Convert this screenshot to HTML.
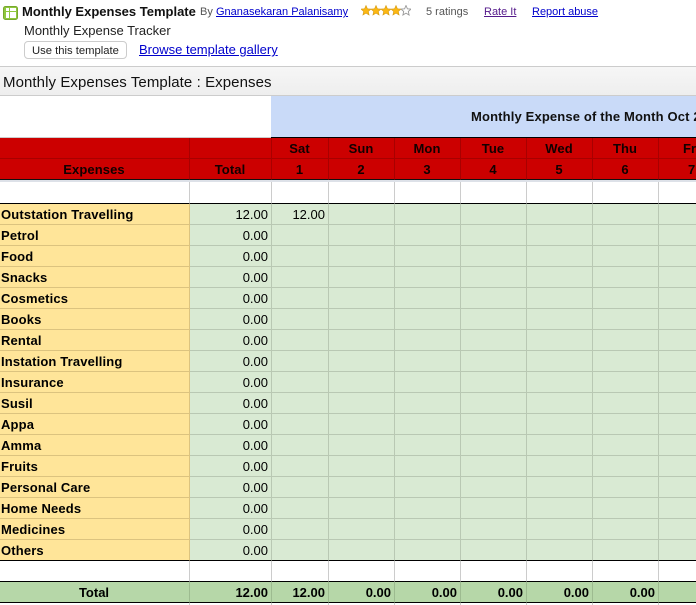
<!DOCTYPE html>
<html><head><meta charset="utf-8">
<style>
html,body{margin:0;padding:0;background:#fff;width:696px;height:605px;overflow:hidden;font-family:"Liberation Sans",Arial,sans-serif;color:#000}
.a{position:absolute;white-space:nowrap}
a{color:#00c;text-decoration:underline}
#wrap{position:absolute;left:0;top:96px;width:696px;height:509px;overflow:hidden}
table{border-collapse:separate;border-spacing:0;table-layout:fixed;width:696px;font-size:13px;line-height:16px}
td{box-sizing:border-box;padding:2px 3px 0 2px;border-right:1px solid #ccc;border-bottom:1px solid #ccc;height:21px;overflow:hidden;white-space:nowrap;background:#fff}
td:last-child{border-right:0}
tr.r td{background:#c00;border-right-color:#a80000;border-bottom-color:#a80000;font-weight:bold;text-align:center;letter-spacing:.1px;color:#100}
tr.r td:last-child{text-align:left;padding:2px 0 0 24px}
tr.r2 td:last-child{padding-left:29px}
tr.r2 td{border-bottom:1px solid #111}
tr.g td{background:#d9ead3;border-right-color:#b9c8b3;border-bottom-color:#b9c8b3;text-align:right}
tr.g td:first-child{background:#ffe599;border-right-color:#dcc37f;border-bottom-color:#dcc37f;text-align:left;font-weight:bold;padding-left:1px;letter-spacing:.15px}
tr.b td{border-bottom-color:#000}
tr.t td{background:#b6d7a8;border-right-color:#9dbb90;border-bottom-color:#000;font-weight:bold;text-align:right}
tr.t td:first-child{text-align:center}
tr.s td{height:24px}
</style></head><body>
<svg class="a" style="left:3px;top:6px" width="15" height="14" viewBox="0 0 15 14"><rect x="0.5" y="0.5" width="14" height="13" rx="2" fill="#8fc83d" stroke="#78a82e"/><rect x="3" y="2" width="10" height="10" fill="#fff"/><rect x="3" y="5" width="10" height="1" fill="#8fc83d"/><rect x="6" y="2" width="1" height="10" fill="#8fc83d"/></svg>
<div class="a" style="left:22px;top:4px;font-size:13px;line-height:16px;font-weight:bold;color:#111">Monthly Expenses Template</div>
<div class="a" style="left:200px;top:5px;font-size:11px;line-height:15px;color:#555">By</div>
<a class="a" style="left:216px;top:5px;font-size:11px;line-height:15px" href="#">Gnanasekaran Palanisamy</a>
<svg class="a" style="left:361px;top:5px" width="50" height="11" viewBox="0 0 50 11">
<g fill="#fcb813" stroke="#d69a10" stroke-width="0.6">
<polygon points="5,.5 6.4,3.8 10,4.1 7.3,6.4 8.1,10 5,8.1 1.9,10 2.7,6.4 0,4.1 3.6,3.8"/>
<polygon transform="translate(10 0)" points="5,.5 6.4,3.8 10,4.1 7.3,6.4 8.1,10 5,8.1 1.9,10 2.7,6.4 0,4.1 3.6,3.8"/>
<polygon transform="translate(20 0)" points="5,.5 6.4,3.8 10,4.1 7.3,6.4 8.1,10 5,8.1 1.9,10 2.7,6.4 0,4.1 3.6,3.8"/>
<polygon transform="translate(30 0)" points="5,.5 6.4,3.8 10,4.1 7.3,6.4 8.1,10 5,8.1 1.9,10 2.7,6.4 0,4.1 3.6,3.8"/>
</g>
<polygon transform="translate(40 0)" fill="#fff" stroke="#999" stroke-width="0.9" points="5,.5 6.4,3.8 10,4.1 7.3,6.4 8.1,10 5,8.1 1.9,10 2.7,6.4 0,4.1 3.6,3.8"/>
</svg>
<div class="a" style="left:426px;top:5px;font-size:11px;line-height:15px;color:#555">5 ratings</div>
<a class="a" style="left:484px;top:5px;font-size:11px;line-height:15px;color:#551a8b" href="#">Rate It</a>
<a class="a" style="left:532px;top:5px;font-size:11px;line-height:15px" href="#">Report abuse</a>
<div class="a" style="left:24px;top:23px;font-size:13px;line-height:16px;color:#222">Monthly Expense Tracker</div>
<div class="a" style="left:24px;top:41px;width:103px;height:18px;box-sizing:border-box;border:1px solid #ccc;border-radius:4px;background:#fff;font-size:11.25px;line-height:18px;text-align:center;color:#222">Use this template</div>
<a class="a" style="left:139px;top:42px;font-size:13px;line-height:16px" href="#">Browse template gallery</a>
<div class="a" style="left:0;top:66px;width:696px;height:30px;box-sizing:border-box;border-top:1px solid #ccc;border-bottom:1px solid #ccc;background:linear-gradient(#f6f6f6,#eee)"></div>
<div class="a" style="left:3px;top:74px;font-size:15px;line-height:18px;letter-spacing:.08px;color:#111">Monthly Expenses Template : Expenses</div>
<div id="wrap">
<table>
<colgroup><col style="width:190px"><col style="width:82px"><col style="width:57px"><col style="width:66px"><col style="width:66px"><col style="width:66px"><col style="width:66px"><col style="width:66px"><col style="width:37px"></colgroup>
<tr><td colspan="2" style="height:42px;border:0;border-bottom:1px solid #ccc"></td><td colspan="7" style="height:42px;background:#c9daf8;border:0;border-bottom:1px solid #000"></td></tr>
<tr class="r"><td></td><td></td><td>Sat</td><td>Sun</td><td>Mon</td><td>Tue</td><td>Wed</td><td>Thu</td><td>Fri</td></tr>
<tr class="r r2"><td>Expenses</td><td>Total</td><td>1</td><td>2</td><td>3</td><td>4</td><td>5</td><td>6</td><td>7</td></tr>
<tr class="b s"><td></td><td></td><td></td><td></td><td></td><td></td><td></td><td></td><td></td></tr>
<tr class="g"><td>Outstation Travelling</td><td>12.00</td><td>12.00</td><td></td><td></td><td></td><td></td><td></td><td></td></tr>
<tr class="g"><td>Petrol</td><td>0.00</td><td></td><td></td><td></td><td></td><td></td><td></td><td></td></tr>
<tr class="g"><td>Food</td><td>0.00</td><td></td><td></td><td></td><td></td><td></td><td></td><td></td></tr>
<tr class="g"><td>Snacks</td><td>0.00</td><td></td><td></td><td></td><td></td><td></td><td></td><td></td></tr>
<tr class="g"><td>Cosmetics</td><td>0.00</td><td></td><td></td><td></td><td></td><td></td><td></td><td></td></tr>
<tr class="g"><td>Books</td><td>0.00</td><td></td><td></td><td></td><td></td><td></td><td></td><td></td></tr>
<tr class="g"><td>Rental</td><td>0.00</td><td></td><td></td><td></td><td></td><td></td><td></td><td></td></tr>
<tr class="g"><td>Instation Travelling</td><td>0.00</td><td></td><td></td><td></td><td></td><td></td><td></td><td></td></tr>
<tr class="g"><td>Insurance</td><td>0.00</td><td></td><td></td><td></td><td></td><td></td><td></td><td></td></tr>
<tr class="g"><td>Susil</td><td>0.00</td><td></td><td></td><td></td><td></td><td></td><td></td><td></td></tr>
<tr class="g"><td>Appa</td><td>0.00</td><td></td><td></td><td></td><td></td><td></td><td></td><td></td></tr>
<tr class="g"><td>Amma</td><td>0.00</td><td></td><td></td><td></td><td></td><td></td><td></td><td></td></tr>
<tr class="g"><td>Fruits</td><td>0.00</td><td></td><td></td><td></td><td></td><td></td><td></td><td></td></tr>
<tr class="g"><td>Personal Care</td><td>0.00</td><td></td><td></td><td></td><td></td><td></td><td></td><td></td></tr>
<tr class="g"><td>Home Needs</td><td>0.00</td><td></td><td></td><td></td><td></td><td></td><td></td><td></td></tr>
<tr class="g"><td>Medicines</td><td>0.00</td><td></td><td></td><td></td><td></td><td></td><td></td><td></td></tr>
<tr class="g"><td style="border-bottom-color:#000">Others</td><td style="border-bottom-color:#000">0.00</td><td style="border-bottom-color:#000"></td><td style="border-bottom-color:#000"></td><td style="border-bottom-color:#000"></td><td style="border-bottom-color:#000"></td><td style="border-bottom-color:#000"></td><td style="border-bottom-color:#000"></td><td style="border-bottom-color:#000"></td></tr>
<tr class="b"><td></td><td></td><td></td><td></td><td></td><td></td><td></td><td></td><td></td></tr>
<tr class="t"><td>Total</td><td>12.00</td><td>12.00</td><td>0.00</td><td>0.00</td><td>0.00</td><td>0.00</td><td>0.00</td><td></td></tr>
<tr><td></td><td></td><td></td><td></td><td></td><td></td><td></td><td></td><td></td></tr>
</table>
</div>
<div class="a" style="left:271px;top:96px;width:1px;height:41px;background:#c9daf8"></div>
<div class="a" style="left:271px;top:137px;width:1px;height:1px;background:#000"></div>
<div class="a" style="left:0;top:180px;width:696px;height:2px;background:#dde1e8"></div>
<div class="a" style="left:471px;top:109px;width:225px;height:16px;overflow:hidden;font-size:13px;line-height:16px;letter-spacing:.15px;font-weight:bold;color:#111">Monthly Expense of the Month Oct 2011</div>
</body></html>
